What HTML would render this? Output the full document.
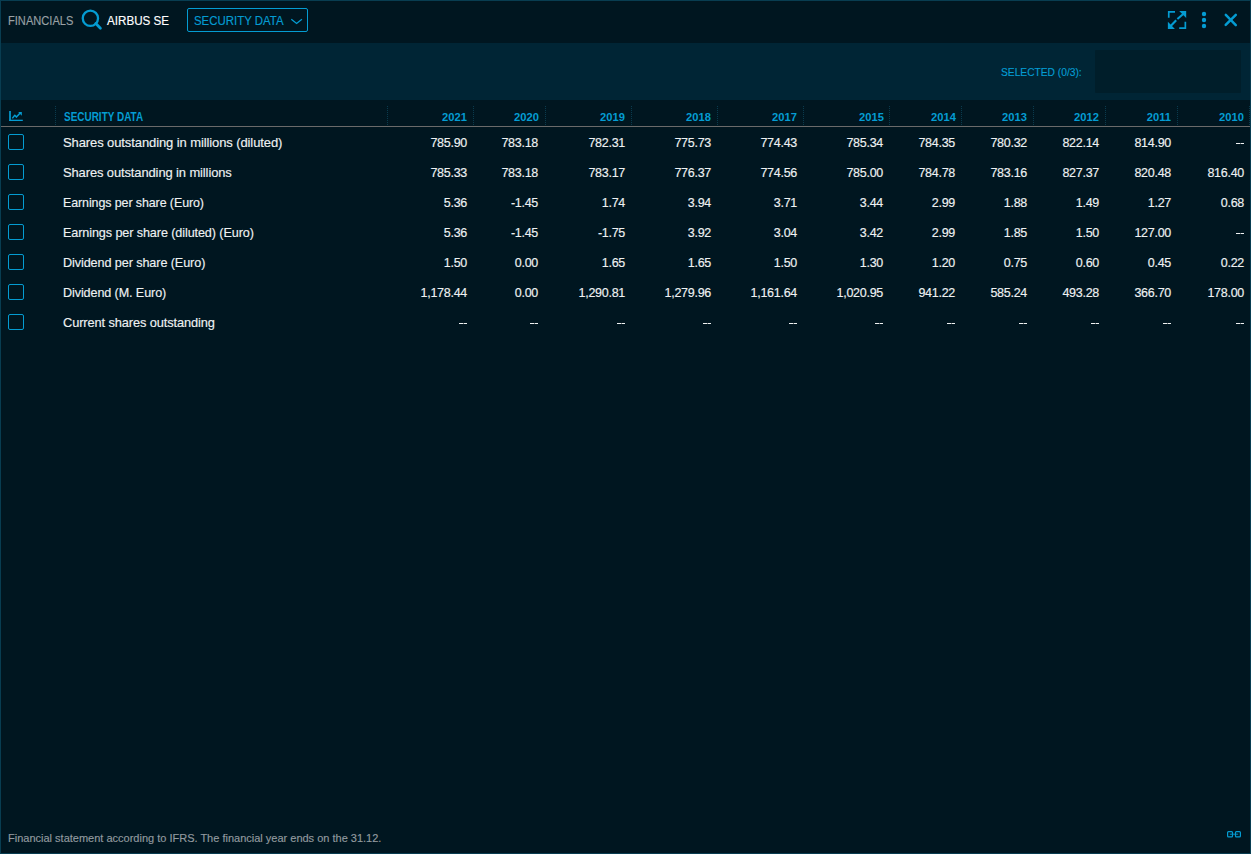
<!DOCTYPE html>
<html><head><meta charset="utf-8">
<style>
*{margin:0;padding:0;box-sizing:border-box}
html,body{width:1251px;height:854px;overflow:hidden;background:#001620}
body{font-family:"Liberation Sans",sans-serif;position:relative}
.a,.lbl,.num{-webkit-text-stroke:0.15px currentColor}
#win{position:absolute;left:0;top:0;width:1251px;height:854px;background:#001620}
#bord{position:absolute;left:0;top:0;width:1251px;height:854px;border:1px solid #083d51;z-index:10}
.a{position:absolute;white-space:nowrap;line-height:1}
#hdr{position:absolute;left:0;top:0;width:1251px;height:43px;background:#001620}
#band{position:absolute;left:0;top:43px;width:1251px;height:57px;background:#002535}
#selbox{position:absolute;left:1095px;top:50px;width:146px;height:43px;background:#001e2a;border-radius:1px}
.blue{color:#049cd2}
.sep{position:absolute;top:106px;width:1px;height:19px;background:repeating-linear-gradient(to bottom,#0a3b4e 0,#0a3b4e 1px,transparent 1px,transparent 2px)}
#hline{position:absolute;left:0;top:126px;width:1251px;height:1px;background:#6a6a6a}
.yr{position:absolute;top:112px;font-size:11.2px;font-weight:bold;color:#049cd2;text-align:right;line-height:11px;letter-spacing:0px}
.row{position:absolute;left:0;width:1249px;height:30px}
.cb{position:absolute;left:8px;top:7px;width:16px;height:16px;border:1px solid #049cd2;border-radius:2px}
.lbl{position:absolute;left:63px;top:9px;font-size:13px;color:#eef1f2;line-height:13px;letter-spacing:-0.1px;transform-origin:0 0}
.num{position:absolute;top:10px;font-size:12.5px;color:#eef1f2;text-align:right;line-height:13px;letter-spacing:-0.28px}
.dash{display:inline-block;width:8.5px;height:1px;background:linear-gradient(to right,#eef1f2 0,#eef1f2 4px,#7d8284 4px,#7d8284 5px,#eef1f2 5px);vertical-align:top;margin-top:6px}
</style></head><body>
<div id="win">
  <div id="hdr"></div>
  <div id="band"></div>
  <div id="selbox"></div>

  <div class="a" style="left:8px;top:15px;font-size:12px;color:#99a0a4;transform:scaleX(0.925);transform-origin:0 0">FINANCIALS</div>
  <svg class="a" style="left:80px;top:8px" width="24" height="24" viewBox="0 0 24 24">
    <circle cx="10.4" cy="10.3" r="7.65" fill="none" stroke="#049cd2" stroke-width="2.3"/>
    <line x1="15.8" y1="15.6" x2="20.4" y2="20.2" stroke="#049cd2" stroke-width="2.8" stroke-linecap="round"/>
  </svg>
  <div class="a" style="left:107px;top:15px;font-size:12px;color:#ffffff;transform:scaleX(0.97);transform-origin:0 0">AIRBUS SE</div>
  <div class="a" style="left:187px;top:8px;width:121px;height:24px;border:1px solid #049cd2;border-radius:2px"></div>
  <div class="a blue" style="left:194px;top:15px;font-size:12px;transform:scaleX(0.952);transform-origin:0 0">SECURITY DATA</div>
  <svg class="a" style="left:290px;top:17px" width="13" height="8" viewBox="0 0 13 8">
    <polyline points="1.3,2.2 6.6,6.4 11.9,2.2" fill="none" stroke="#049cd2" stroke-width="1.3"/>
  </svg>

  <!-- right icons -->
  <svg class="a" style="left:1164px;top:8px" width="26" height="24" viewBox="0 0 26 24">
    <g fill="none" stroke="#049cd2" stroke-width="1.7">
      <polyline points="4.75,9.8 4.75,3.95 11,3.95"/>
      <polyline points="15.2,20.05 21.35,20.05 21.35,13.8"/>
      <line x1="19.8" y1="5.5" x2="13.4" y2="11.0" stroke-width="2.1"/>
      <line x1="6.2" y1="18.5" x2="12.2" y2="12.3" stroke-width="2.1"/>
    </g>
    <g fill="#049cd2">
      <polygon points="15.2,3.1 22.2,3.1 22.2,9.9"/>
      <polygon points="3.9,13.8 3.9,20.9 10.9,20.9"/>
    </g>
  </svg>
  <svg class="a" style="left:1198px;top:8px" width="12" height="24" viewBox="0 0 12 24">
    <circle cx="6" cy="6" r="2.2" fill="#049cd2"/>
    <circle cx="6" cy="12" r="2.2" fill="#049cd2"/>
    <circle cx="6" cy="18" r="2.2" fill="#049cd2"/>
  </svg>
  <svg class="a" style="left:1222px;top:11px" width="18" height="18" viewBox="0 0 18 18">
    <g stroke="#049cd2" stroke-width="2.5" stroke-linecap="round">
      <line x1="3.8" y1="3.9" x2="13.8" y2="14.1"/>
      <line x1="13.8" y1="3.8" x2="3.7" y2="13.9"/>
    </g>
  </svg>

  <div class="a blue" style="left:1001px;top:67px;font-size:11.3px;transform:scaleX(0.905);transform-origin:0 0">SELECTED (0/3):</div>

  <!-- table header -->
  <svg class="a" style="left:4px;top:104px" width="24" height="24" viewBox="0 0 24 24">
    <g fill="none" stroke="#049cd2">
      <line x1="6" y1="7" x2="6" y2="16.9" stroke-width="1.7"/>
      <line x1="5.2" y1="16.35" x2="18.8" y2="16.35" stroke-width="1.3"/>
      <polyline points="8.3,14.4 10.8,11.3 12.4,13.1 16,9.2" stroke-width="1.5" stroke-linejoin="round"/>
    </g>
    <polygon points="14.2,8.1 17.8,8.1 17.8,11.7" fill="#049cd2"/>
  </svg>
  <div class="sep" style="left:55px"></div>
  <div class="a" style="left:64px;top:111px;font-size:12px;font-weight:bold;color:#049cd2;transform:scaleX(0.83);transform-origin:0 0;-webkit-text-stroke:0">SECURITY DATA</div>
  <div class="sep" style="left:387px"></div>
  <div class="sep" style="left:473px"></div>
  <div class="sep" style="left:545px"></div>
  <div class="sep" style="left:631px"></div>
  <div class="sep" style="left:717px"></div>
  <div class="sep" style="left:803px"></div>
  <div class="sep" style="left:889px"></div>
  <div class="sep" style="left:961px"></div>
  <div class="sep" style="left:1033px"></div>
  <div class="sep" style="left:1105px"></div>
  <div class="sep" style="left:1177px"></div>
  <div class="sep" style="left:1249px"></div>
  <div id="hline"></div>
  <div id="years">
  <div class="yr" style="left:387px;width:80px">2021</div>
  <div class="yr" style="left:459px;width:80px">2020</div>
  <div class="yr" style="left:545px;width:80px">2019</div>
  <div class="yr" style="left:631px;width:80px">2018</div>
  <div class="yr" style="left:717px;width:80px">2017</div>
  <div class="yr" style="left:804px;width:80px">2015</div>
  <div class="yr" style="left:876px;width:80px">2014</div>
  <div class="yr" style="left:947px;width:80px">2013</div>
  <div class="yr" style="left:1019px;width:80px">2012</div>
  <div class="yr" style="left:1091px;width:80px">2011</div>
  <div class="yr" style="left:1164px;width:80px">2010</div>
  </div><!--/years-->
  <div id="rows">
  <div class="row" style="top:127px"><div class="cb"></div><div class="lbl" style="transform:scaleX(1.0)">Shares outstanding in millions (diluted)</div><div class="num" style="left:387px;width:80px">785.90</div><div class="num" style="left:458px;width:80px">783.18</div><div class="num" style="left:545px;width:80px">782.31</div><div class="num" style="left:631px;width:80px">775.73</div><div class="num" style="left:717px;width:80px">774.43</div><div class="num" style="left:803px;width:80px">785.34</div><div class="num" style="left:875px;width:80px">784.35</div><div class="num" style="left:947px;width:80px">780.32</div><div class="num" style="left:1019px;width:80px">822.14</div><div class="num" style="left:1091px;width:80px">814.90</div><div class="num" style="left:1164px;width:80px"><span class="dash"></span></div></div>
  <div class="row" style="top:157px"><div class="cb"></div><div class="lbl" style="transform:scaleX(0.994)">Shares outstanding in millions</div><div class="num" style="left:387px;width:80px">785.33</div><div class="num" style="left:458px;width:80px">783.18</div><div class="num" style="left:545px;width:80px">783.17</div><div class="num" style="left:631px;width:80px">776.37</div><div class="num" style="left:717px;width:80px">774.56</div><div class="num" style="left:803px;width:80px">785.00</div><div class="num" style="left:875px;width:80px">784.78</div><div class="num" style="left:947px;width:80px">783.16</div><div class="num" style="left:1019px;width:80px">827.37</div><div class="num" style="left:1091px;width:80px">820.48</div><div class="num" style="left:1164px;width:80px">816.40</div></div>
  <div class="row" style="top:187px"><div class="cb"></div><div class="lbl" style="transform:scaleX(0.958)">Earnings per share (Euro)</div><div class="num" style="left:387px;width:80px">5.36</div><div class="num" style="left:458px;width:80px">-1.45</div><div class="num" style="left:545px;width:80px">1.74</div><div class="num" style="left:631px;width:80px">3.94</div><div class="num" style="left:717px;width:80px">3.71</div><div class="num" style="left:803px;width:80px">3.44</div><div class="num" style="left:875px;width:80px">2.99</div><div class="num" style="left:947px;width:80px">1.88</div><div class="num" style="left:1019px;width:80px">1.49</div><div class="num" style="left:1091px;width:80px">1.27</div><div class="num" style="left:1164px;width:80px">0.68</div></div>
  <div class="row" style="top:217px"><div class="cb"></div><div class="lbl" style="transform:scaleX(0.97)">Earnings per share (diluted) (Euro)</div><div class="num" style="left:387px;width:80px">5.36</div><div class="num" style="left:458px;width:80px">-1.45</div><div class="num" style="left:545px;width:80px">-1.75</div><div class="num" style="left:631px;width:80px">3.92</div><div class="num" style="left:717px;width:80px">3.04</div><div class="num" style="left:803px;width:80px">3.42</div><div class="num" style="left:875px;width:80px">2.99</div><div class="num" style="left:947px;width:80px">1.85</div><div class="num" style="left:1019px;width:80px">1.50</div><div class="num" style="left:1091px;width:80px">127.00</div><div class="num" style="left:1164px;width:80px"><span class="dash"></span></div></div>
  <div class="row" style="top:247px"><div class="cb"></div><div class="lbl" style="transform:scaleX(0.972)">Dividend per share (Euro)</div><div class="num" style="left:387px;width:80px">1.50</div><div class="num" style="left:458px;width:80px">0.00</div><div class="num" style="left:545px;width:80px">1.65</div><div class="num" style="left:631px;width:80px">1.65</div><div class="num" style="left:717px;width:80px">1.50</div><div class="num" style="left:803px;width:80px">1.30</div><div class="num" style="left:875px;width:80px">1.20</div><div class="num" style="left:947px;width:80px">0.75</div><div class="num" style="left:1019px;width:80px">0.60</div><div class="num" style="left:1091px;width:80px">0.45</div><div class="num" style="left:1164px;width:80px">0.22</div></div>
  <div class="row" style="top:277px"><div class="cb"></div><div class="lbl" style="transform:scaleX(0.968)">Dividend (M. Euro)</div><div class="num" style="left:387px;width:80px">1,178.44</div><div class="num" style="left:458px;width:80px">0.00</div><div class="num" style="left:545px;width:80px">1,290.81</div><div class="num" style="left:631px;width:80px">1,279.96</div><div class="num" style="left:717px;width:80px">1,161.64</div><div class="num" style="left:803px;width:80px">1,020.95</div><div class="num" style="left:875px;width:80px">941.22</div><div class="num" style="left:947px;width:80px">585.24</div><div class="num" style="left:1019px;width:80px">493.28</div><div class="num" style="left:1091px;width:80px">366.70</div><div class="num" style="left:1164px;width:80px">178.00</div></div>
  <div class="row" style="top:307px"><div class="cb"></div><div class="lbl" style="transform:scaleX(0.984)">Current shares outstanding</div><div class="num" style="left:387px;width:80px"><span class="dash"></span></div><div class="num" style="left:458px;width:80px"><span class="dash"></span></div><div class="num" style="left:545px;width:80px"><span class="dash"></span></div><div class="num" style="left:631px;width:80px"><span class="dash"></span></div><div class="num" style="left:717px;width:80px"><span class="dash"></span></div><div class="num" style="left:803px;width:80px"><span class="dash"></span></div><div class="num" style="left:875px;width:80px"><span class="dash"></span></div><div class="num" style="left:947px;width:80px"><span class="dash"></span></div><div class="num" style="left:1019px;width:80px"><span class="dash"></span></div><div class="num" style="left:1091px;width:80px"><span class="dash"></span></div><div class="num" style="left:1164px;width:80px"><span class="dash"></span></div></div>
  </div><!--/rows-->

  <div class="a" style="left:8px;top:833px;font-size:11px;color:#929a9f;letter-spacing:0px">Financial statement according to IFRS. The financial year ends on the 31.12.</div>
  <svg class="a" style="left:1224px;top:828px" width="20" height="12" viewBox="0 0 20 12">
    <g fill="none" stroke="#049cd2">
      <rect x="3.6" y="3.6" width="4.9" height="5.2" rx="0.9" stroke-width="1.2"/>
      <rect x="11.5" y="3.6" width="4.9" height="5.2" rx="0.9" stroke-width="1.2"/>
      <line x1="5.8" y1="6.2" x2="14.2" y2="6.2" stroke-width="0.9"/>
    </g>
  </svg>
<div id="bord"></div>
</div>
</body></html>
